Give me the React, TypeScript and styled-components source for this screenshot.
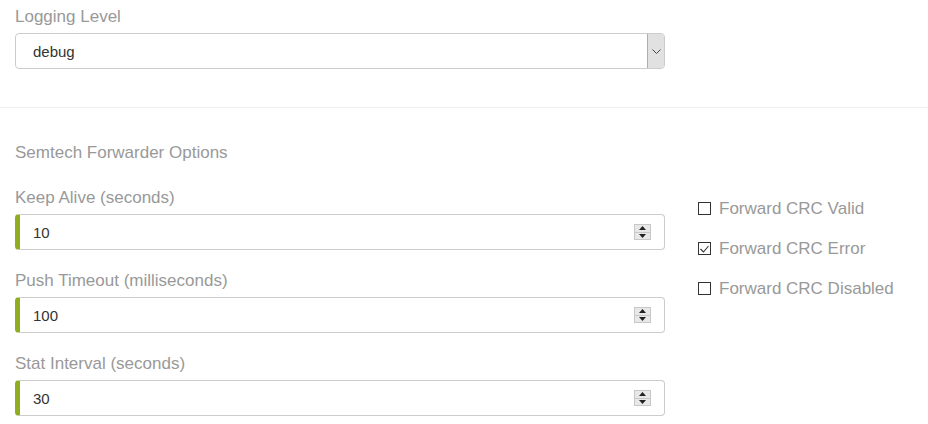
import styled, { createGlobalStyle } from "styled-components";

const GlobalStyle = createGlobalStyle`
  body {
    margin: 0;
    background: #fff;
    font-family: "Liberation Sans", Arial, sans-serif;
  }
`;

const Page = styled.div`
  padding-top: 6px;
`;

const Section = styled.div`
  padding: 0 15px;
`;

const Label = styled.div`
  font-size: 17px;
  line-height: 21px;
  color: #999;
  margin-bottom: 6px;
`;

const Heading = styled.div`
  font-size: 17px;
  line-height: 21px;
  color: #999;
  margin-top: 34px;
`;

const Divider = styled.hr`
  margin: 38px 0 0;
  border: 0;
  border-top: 1px solid #eee;
`;

const SelectBox = styled.div`
  width: 650px;
  height: 36px;
  box-sizing: border-box;
  display: flex;
  border: 1px solid #ccc;
  border-radius: 4px;
  overflow: hidden;
`;

const SelectValue = styled.div`
  flex: 1;
  display: flex;
  align-items: center;
  padding-left: 17px;
  font-size: 15px;
  color: #333;
`;

const ArrowBox = styled.div`
  width: 16px;
  display: flex;
  align-items: center;
  justify-content: center;
  background: #e1e1e1;
  border-left: 1px solid #adadad;
`;

const Grid = styled.div`
  display: grid;
  grid-template-columns: 650px 1fr;
  column-gap: 33px;
  margin-top: 24px;
`;

const Column = styled.div`
  display: flex;
  flex-direction: column;
  gap: 20px;
`;

const Field = styled.div``;

const NumberBox = styled.div`
  height: 36px;
  box-sizing: border-box;
  display: flex;
  align-items: center;
  border: 1px solid #ccc;
  border-left: 5px solid #8fae1f;
  border-radius: 4px;
  padding: 0 13px;
`;

const NumberValue = styled.input`
  flex: 1;
  border: 0;
  outline: none;
  padding: 0;
  font-family: inherit;
  font-size: 15px;
  color: #333;
  background: transparent;
`;

const Spinner = styled.div`
  width: 17px;
  height: 16px;
  box-sizing: border-box;
  display: flex;
  flex-direction: column;
  border: 1px solid #c8c8c8;
  background: #e8e8e8;
`;

const SpinHalf = styled.div<{ $down?: boolean }>`
  flex: 1;
  display: flex;
  align-items: center;
  justify-content: center;
  border-top: ${(p) => (p.$down ? "1px solid #c8c8c8" : "0")};
`;

const Checks = styled.div`
  display: flex;
  flex-direction: column;
  gap: 19px;
  padding-top: 11px;
`;

const CheckRow = styled.label`
  display: flex;
  align-items: center;
  gap: 8px;
  font-size: 17px;
  line-height: 21px;
  color: #999;
`;

const Box = styled.span`
  width: 13px;
  height: 13px;
  box-sizing: border-box;
  border: 1px solid #333;
  background: #fff;
  display: flex;
  align-items: center;
  justify-content: center;
`;

const fields = [
  { label: "Keep Alive (seconds)", value: "10" },
  { label: "Push Timeout (milliseconds)", value: "100" },
  { label: "Stat Interval (seconds)", value: "30" },
];

const checks = [
  { label: "Forward CRC Valid", checked: false },
  { label: "Forward CRC Error", checked: true },
  { label: "Forward CRC Disabled", checked: false },
];

function NumberField({ label, value }: { label: string; value: string }) {
  return (
    <Field>
      <Label>{label}</Label>
      <NumberBox>
        <NumberValue type="text" defaultValue={value} />
        <Spinner>
          <SpinHalf>
            <svg width="7" height="4" viewBox="0 0 7 4">
              <path d="M0 4 L3.5 0 L7 4 Z" fill="#222" />
            </svg>
          </SpinHalf>
          <SpinHalf $down>
            <svg width="7" height="4" viewBox="0 0 7 4">
              <path d="M0 0 L3.5 4 L7 0 Z" fill="#222" />
            </svg>
          </SpinHalf>
        </Spinner>
      </NumberBox>
    </Field>
  );
}

export default function App() {
  return (
    <Page>
      <GlobalStyle />
      <Section>
        <Label>Logging Level</Label>
        <SelectBox>
          <SelectValue>debug</SelectValue>
          <ArrowBox>
            <svg width="9" height="5" viewBox="0 0 9 5">
              <path d="M0.5 0.5 L4.5 4.5 L8.5 0.5" fill="none" stroke="#444" strokeWidth="1" />
            </svg>
          </ArrowBox>
        </SelectBox>
      </Section>
      <Divider />
      <Section>
        <Heading>Semtech Forwarder Options</Heading>
        <Grid>
          <Column>
            {fields.map((f) => (
              <NumberField key={f.label} label={f.label} value={f.value} />
            ))}
          </Column>
          <Checks>
            {checks.map((c) => (
              <CheckRow key={c.label}>
                <Box>
                  {c.checked && (
                    <svg width="9" height="8" viewBox="0 0 9 8">
                      <path d="M0.5 4 L3.5 7 L8.5 1" fill="none" stroke="#333" strokeWidth="1.1" />
                    </svg>
                  )}
                </Box>
                {c.label}
              </CheckRow>
            ))}
          </Checks>
        </Grid>
      </Section>
    </Page>
  );
}
